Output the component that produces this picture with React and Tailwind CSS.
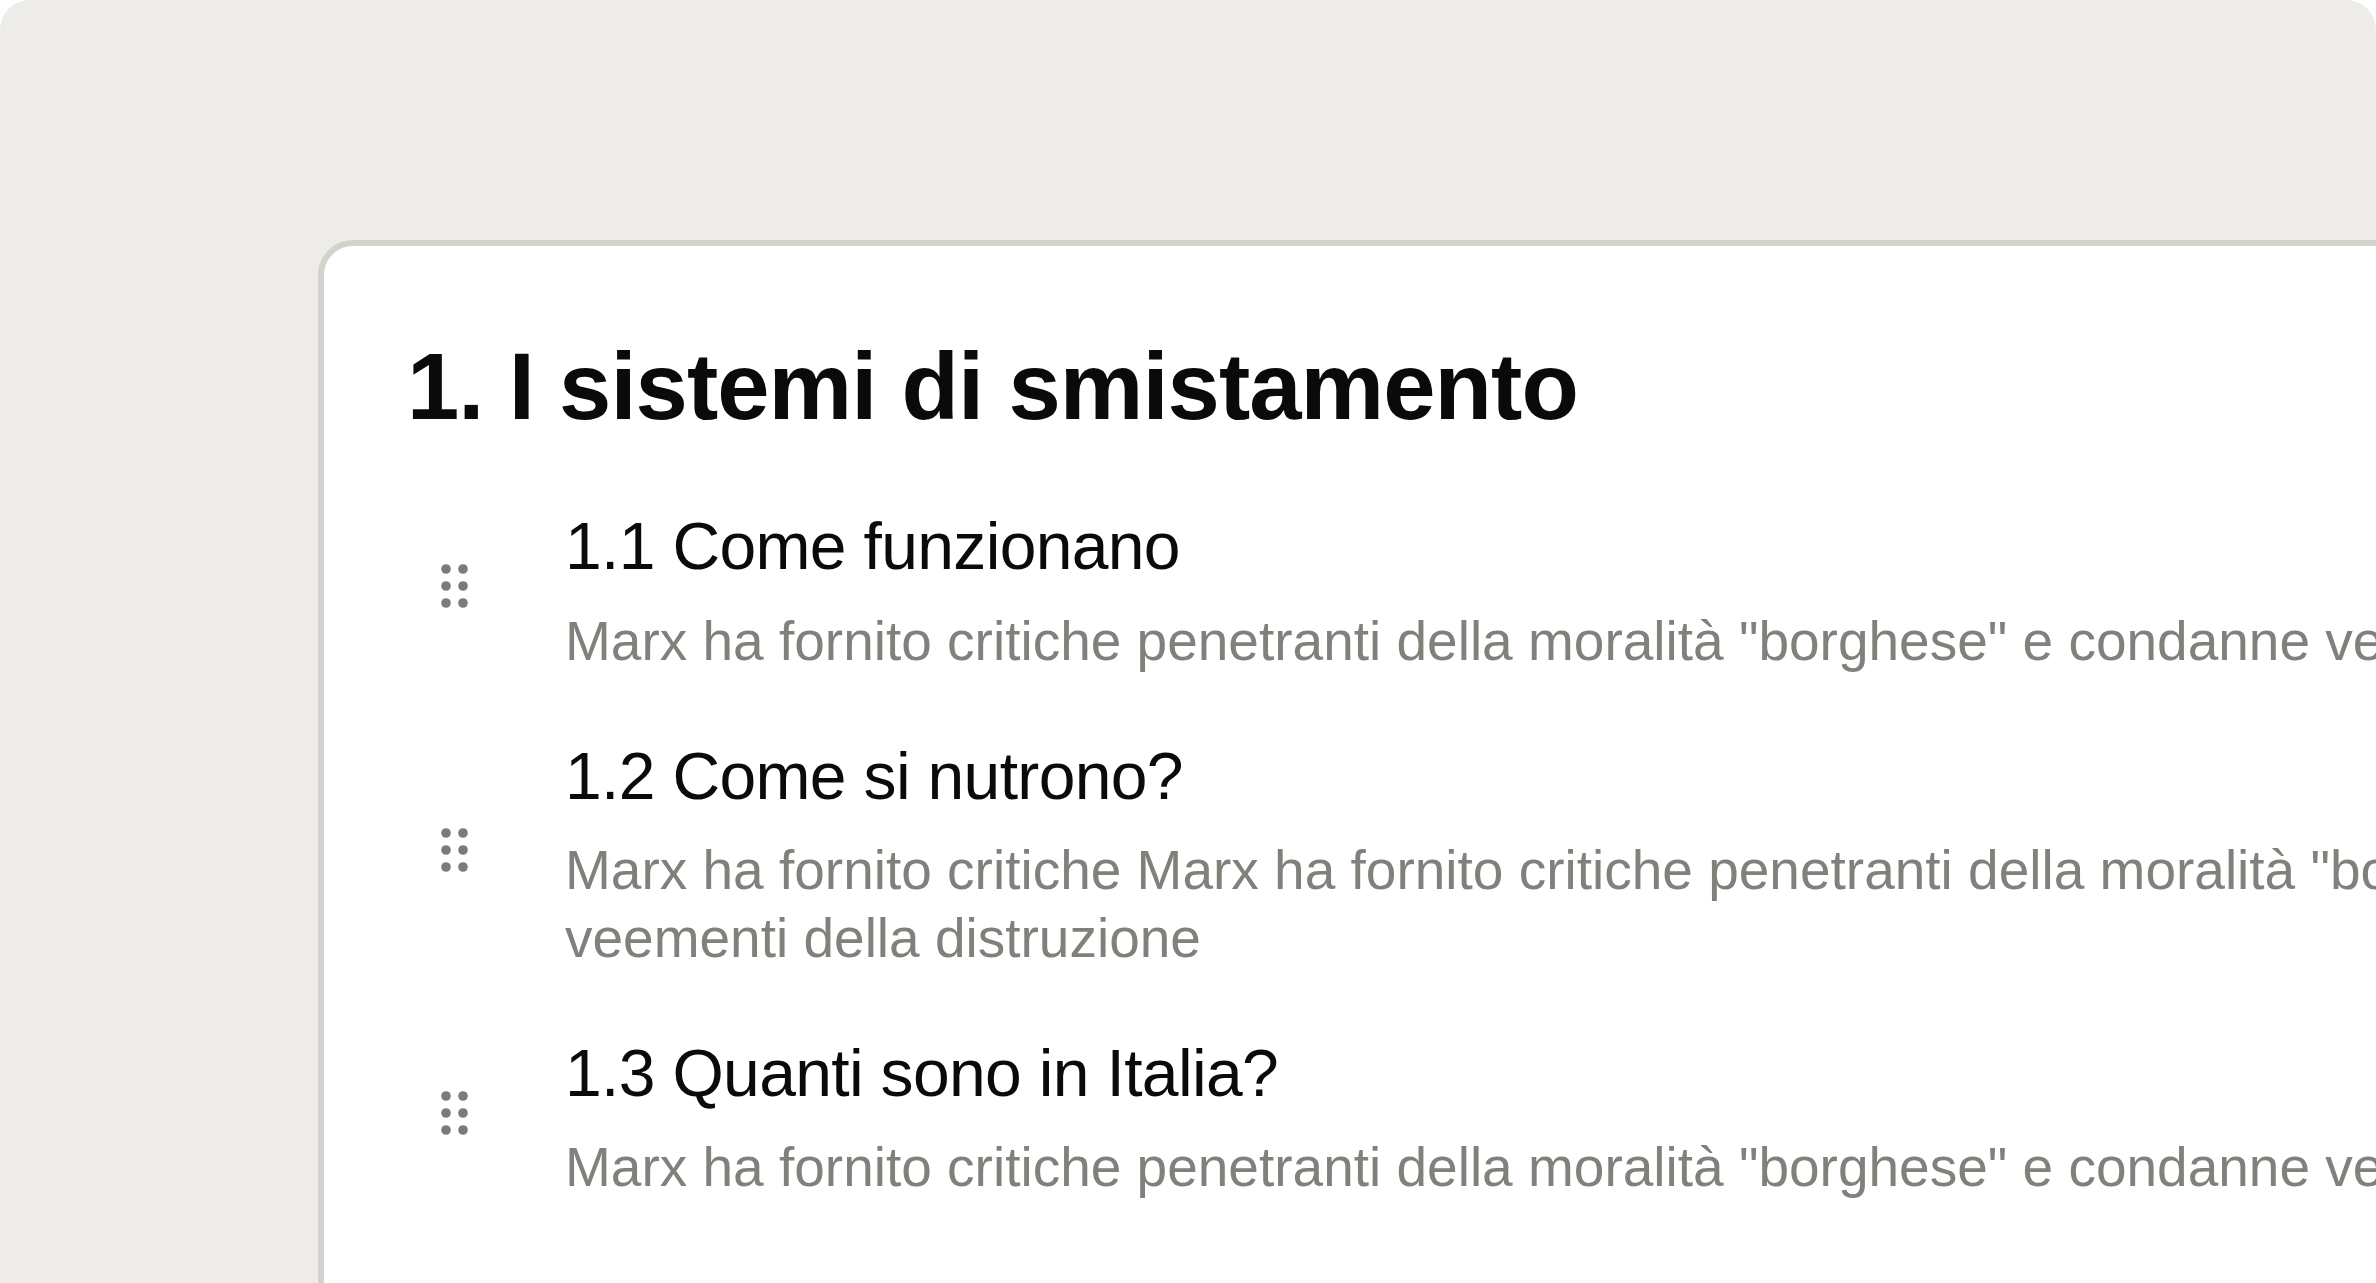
import React from 'react'

const sections = [
  {
    title: '1.1 Come funzionano',
    text: 'Marx ha fornito critiche penetranti della moralità "borghese" e condanne veementi della distruzione',
  },
  {
    title: '1.2 Come si nutrono?',
    text: 'Marx ha fornito critiche Marx ha fornito critiche penetranti della moralità "borghese" e condanne veementi della distruzione',
  },
  {
    title: '1.3 Quanti sono in Italia?',
    text: 'Marx ha fornito critiche penetranti della moralità "borghese" e condanne veementi della distruzione',
  },
]

function DragHandle() {
  return (
    <svg width="27" height="44" viewBox="0 0 27 44" className="shrink-0 mb-[9px]" fill="#7b7b77">
      <circle cx="5" cy="5" r="4.8" />
      <circle cx="22" cy="5" r="4.8" />
      <circle cx="5" cy="22" r="4.8" />
      <circle cx="22" cy="22" r="4.8" />
      <circle cx="5" cy="39" r="4.8" />
      <circle cx="22" cy="39" r="4.8" />
    </svg>
  )
}

export default function App() {
  return (
    <div className="w-[2376px] h-[1283px] overflow-hidden bg-white font-['Liberation_Sans',Arial,sans-serif]">
      <div className="h-full overflow-hidden rounded-t-[30px] bg-[#edece8] pl-[318px] pt-[240px]">
        {/* Document card */}
        <div className="w-[3000px] h-[1400px] rounded-tl-[35px] border-[6px] border-[#d3d2cc] bg-white pl-[83px] pt-[89px]">
          <h1 className="text-[94px] leading-[1.1] font-bold tracking-[-0.01em] text-[#0a0a0a]">
            1. I sistemi di smistamento
          </h1>

          <div className="mt-[69px] ml-[34px] flex flex-col gap-[62px]">
            {sections.map((s, i) => (
              <div key={i} className="flex items-center gap-[97px]">
                <DragHandle />
                <div className="w-[2460px]">
                  <h2 className="text-[66px] leading-[1.2] tracking-[-0.01em] text-[#0a0a0a]">{s.title}</h2>
                  <p className="mt-5 text-[55px] leading-[68px] text-[#81807b]">{s.text}</p>
                </div>
              </div>
            ))}
          </div>
        </div>
      </div>
    </div>
  )
}
